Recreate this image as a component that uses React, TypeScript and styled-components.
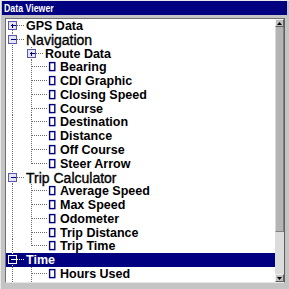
import React from "react";
import styled, { createGlobalStyle } from "styled-components";

const GlobalStyle = createGlobalStyle`
  body {
    margin: 0;
    background: #c4c4c4;
    font-family: "Liberation Sans", Arial, sans-serif;
  }
`;

const ROW_H = 13.78;

type Kind = "plus" | "minus" | "leaf";
interface Item {
  label: string;
  level: 0 | 1;
  kind: Kind;
  big?: boolean;
  selected?: boolean;
  last?: boolean;
}

const items: Item[] = [
  { label: "GPS Data", level: 0, kind: "plus" },
  { label: "Navigation", level: 0, kind: "minus", big: true },
  { label: "Route Data", level: 1, kind: "plus" },
  { label: "Bearing", level: 1, kind: "leaf" },
  { label: "CDI Graphic", level: 1, kind: "leaf" },
  { label: "Closing Speed", level: 1, kind: "leaf" },
  { label: "Course", level: 1, kind: "leaf" },
  { label: "Destination", level: 1, kind: "leaf" },
  { label: "Distance", level: 1, kind: "leaf" },
  { label: "Off Course", level: 1, kind: "leaf" },
  { label: "Steer Arrow", level: 1, kind: "leaf", last: true },
  { label: "Trip Calculator", level: 0, kind: "minus", big: true },
  { label: "Average Speed", level: 1, kind: "leaf" },
  { label: "Max Speed", level: 1, kind: "leaf" },
  { label: "Odometer", level: 1, kind: "leaf" },
  { label: "Trip Distance", level: 1, kind: "leaf" },
  { label: "Trip Time", level: 1, kind: "leaf", last: true },
  { label: "Time", level: 0, kind: "minus", selected: true },
  { label: "Hours Used", level: 1, kind: "leaf" },
  { label: "Local Time", level: 1, kind: "leaf" },
];

const Window = styled.div`
  width: 289px;
  height: 289px;
  box-sizing: border-box;
  padding: 1px 2px 0 1px;
  background: #c4c4c4;
  border-top: 1px solid #e8e8e8;
  border-left: 1px solid #e8e8e8;
  overflow: hidden;
`;

const TitleBar = styled.div`
  display: flex;
  align-items: center;
  height: 14px;
  margin-top: -1px;
  background: #000080;
  color: #fff;
  padding-left: 2px;
`;

const TitleText = styled.span`
  display: inline-block;
  font-size: 11px;
  font-weight: bold;
  line-height: 12px;
  transform: scaleX(0.8);
  transform-origin: left center;
`;

const ListFrame = styled.div`
  display: flex;
  width: 280px;
  height: 265px;
  box-sizing: border-box;
  margin: 3px 0 0 3px;
  border-top: 1px solid #707070;
  border-left: 1px solid #707070;
  border-right: 1px solid #606060;
  border-bottom: 1px solid #e8e8e8;
  background: #fff;
`;

const Tree = styled.div`
  flex: 1;
  overflow: hidden;
`;

const Row = styled.div<{ $h: number; $sel?: boolean }>`
  display: flex;
  align-items: center;
  height: ${(p) => p.$h}px;
  background: ${(p) => (p.$sel ? "#000080" : "transparent")};
  color: ${(p) => (p.$sel ? "#fff" : "#000")};
  white-space: nowrap;
`;

const Label = styled.span<{ $big?: boolean }>`
  font-size: ${(p) => (p.$big ? "14px" : "12.5px")};
  font-weight: ${(p) => (p.$big ? "normal" : "bold")};
  -webkit-text-stroke: ${(p) => (p.$big ? "0.35px" : "0")};
  line-height: 1;
  margin-top: ${(p) => (p.$big ? "0" : "1px")};
`;

const Scrollbar = styled.div`
  width: 9px;
  display: flex;
  flex-direction: column;
  background: #d8d8d8;
`;

const ArrowButton = styled.div`
  height: 8px;
  box-sizing: border-box;
  display: flex;
  align-items: center;
  justify-content: center;
  background: #c0c0c0;
  border-top: 1px solid #f0f0f0;
  border-left: 1px solid #f0f0f0;
  border-right: 1px solid #606060;
  border-bottom: 1px solid #606060;
`;

const Thumb = styled.div`
  height: 205px;
  box-sizing: border-box;
  background: #b4b4b4;
  border-left: 1px solid #d8d8d8;
  border-right: 1px solid #808080;
  border-bottom: 1px solid #808080;
`;

const Track = styled.div`
  flex: 1;
  background: #dcdcdc;
`;

const Tri = ({ up }: { up?: boolean }) => (
  <svg width="5" height="3" style={{ display: "block" }}>
    <polygon points={up ? "2.5,0 5,3 0,3" : "0,0 5,0 2.5,3"} fill="#000" />
  </svg>
);

const Gutter = ({ item }: { item: Item }) => {
  const w = item.level === 0 ? 20 : item.kind === "leaf" ? 54 : 39;
  const H = 14;
  const cy = 6.5;
  const sel = !!item.selected;
  const dot = sel ? "#fff" : "#6a6a6a";
  const first = item.label === "GPS Data";
  const isRoot = item.level === 0;
  const boxX = isRoot ? 2.5 : 21.5;
  return (
    <svg width={w} height={H} style={{ display: "block", overflow: "visible", flexShrink: 0 }}>
      <g shapeRendering="crispEdges">
        {/* root sibling line */}
        <line x1={6.5} y1={first ? cy : 0} x2={6.5} y2={H} stroke={dot} strokeDasharray="1 1" />
        {!isRoot && (
          <line x1={25.5} y1={0} x2={25.5} y2={item.last ? cy : H} stroke={dot} strokeDasharray="1 1" />
        )}
        {isRoot && <line x1={11} y1={cy} x2={19} y2={cy} stroke={dot} strokeDasharray="1 1" />}
        {!isRoot && item.kind !== "leaf" && (
          <line x1={30} y1={cy} x2={37} y2={cy} stroke={dot} strokeDasharray="1 1" />
        )}
        {item.kind === "leaf" && (
          <line x1={26} y1={cy} x2={42} y2={cy} stroke={dot} strokeDasharray="1 1" />
        )}
        {item.kind !== "leaf" && (
          <>
            <rect
              x={boxX}
              y={2.5}
              width={8}
              height={8}
              fill={sel ? "#000080" : "#e4e4f4"}
              stroke={sel ? "#fff" : "#5a5aa8"}
            />
            <line x1={boxX + 2} y1={cy} x2={boxX + 7} y2={cy} stroke={sel ? "#fff" : "#000080"} />
            {item.kind === "plus" && (
              <line x1={boxX + 4} y1={4.5} x2={boxX + 4} y2={9} stroke="#000080" />
            )}
          </>
        )}
      </g>
      {item.kind === "leaf" && (
        <rect x={43.6} y={2.6} width={5.2} height={8} fill="none" stroke="#000080" strokeWidth={1.4} />
      )}
    </svg>
  );
};

export default function App() {
  return (
    <>
      <GlobalStyle />
      <Window>
        <TitleBar>
          <TitleText>Data Viewer</TitleText>
        </TitleBar>
        <ListFrame>
          <Tree>
            {items.map((it, i) => {
              const h = Math.round((i + 1) * ROW_H) - Math.round(i * ROW_H);
              return (
                <Row key={it.label} $h={h} $sel={it.selected}>
                  <Gutter item={it} />
                  <Label $big={it.big}>{it.label}</Label>
                </Row>
              );
            })}
          </Tree>
          <Scrollbar>
            <ArrowButton>
              <Tri up />
            </ArrowButton>
            <Thumb />
            <Track />
            <ArrowButton>
              <Tri />
            </ArrowButton>
          </Scrollbar>
        </ListFrame>
      </Window>
    </>
  );
}
